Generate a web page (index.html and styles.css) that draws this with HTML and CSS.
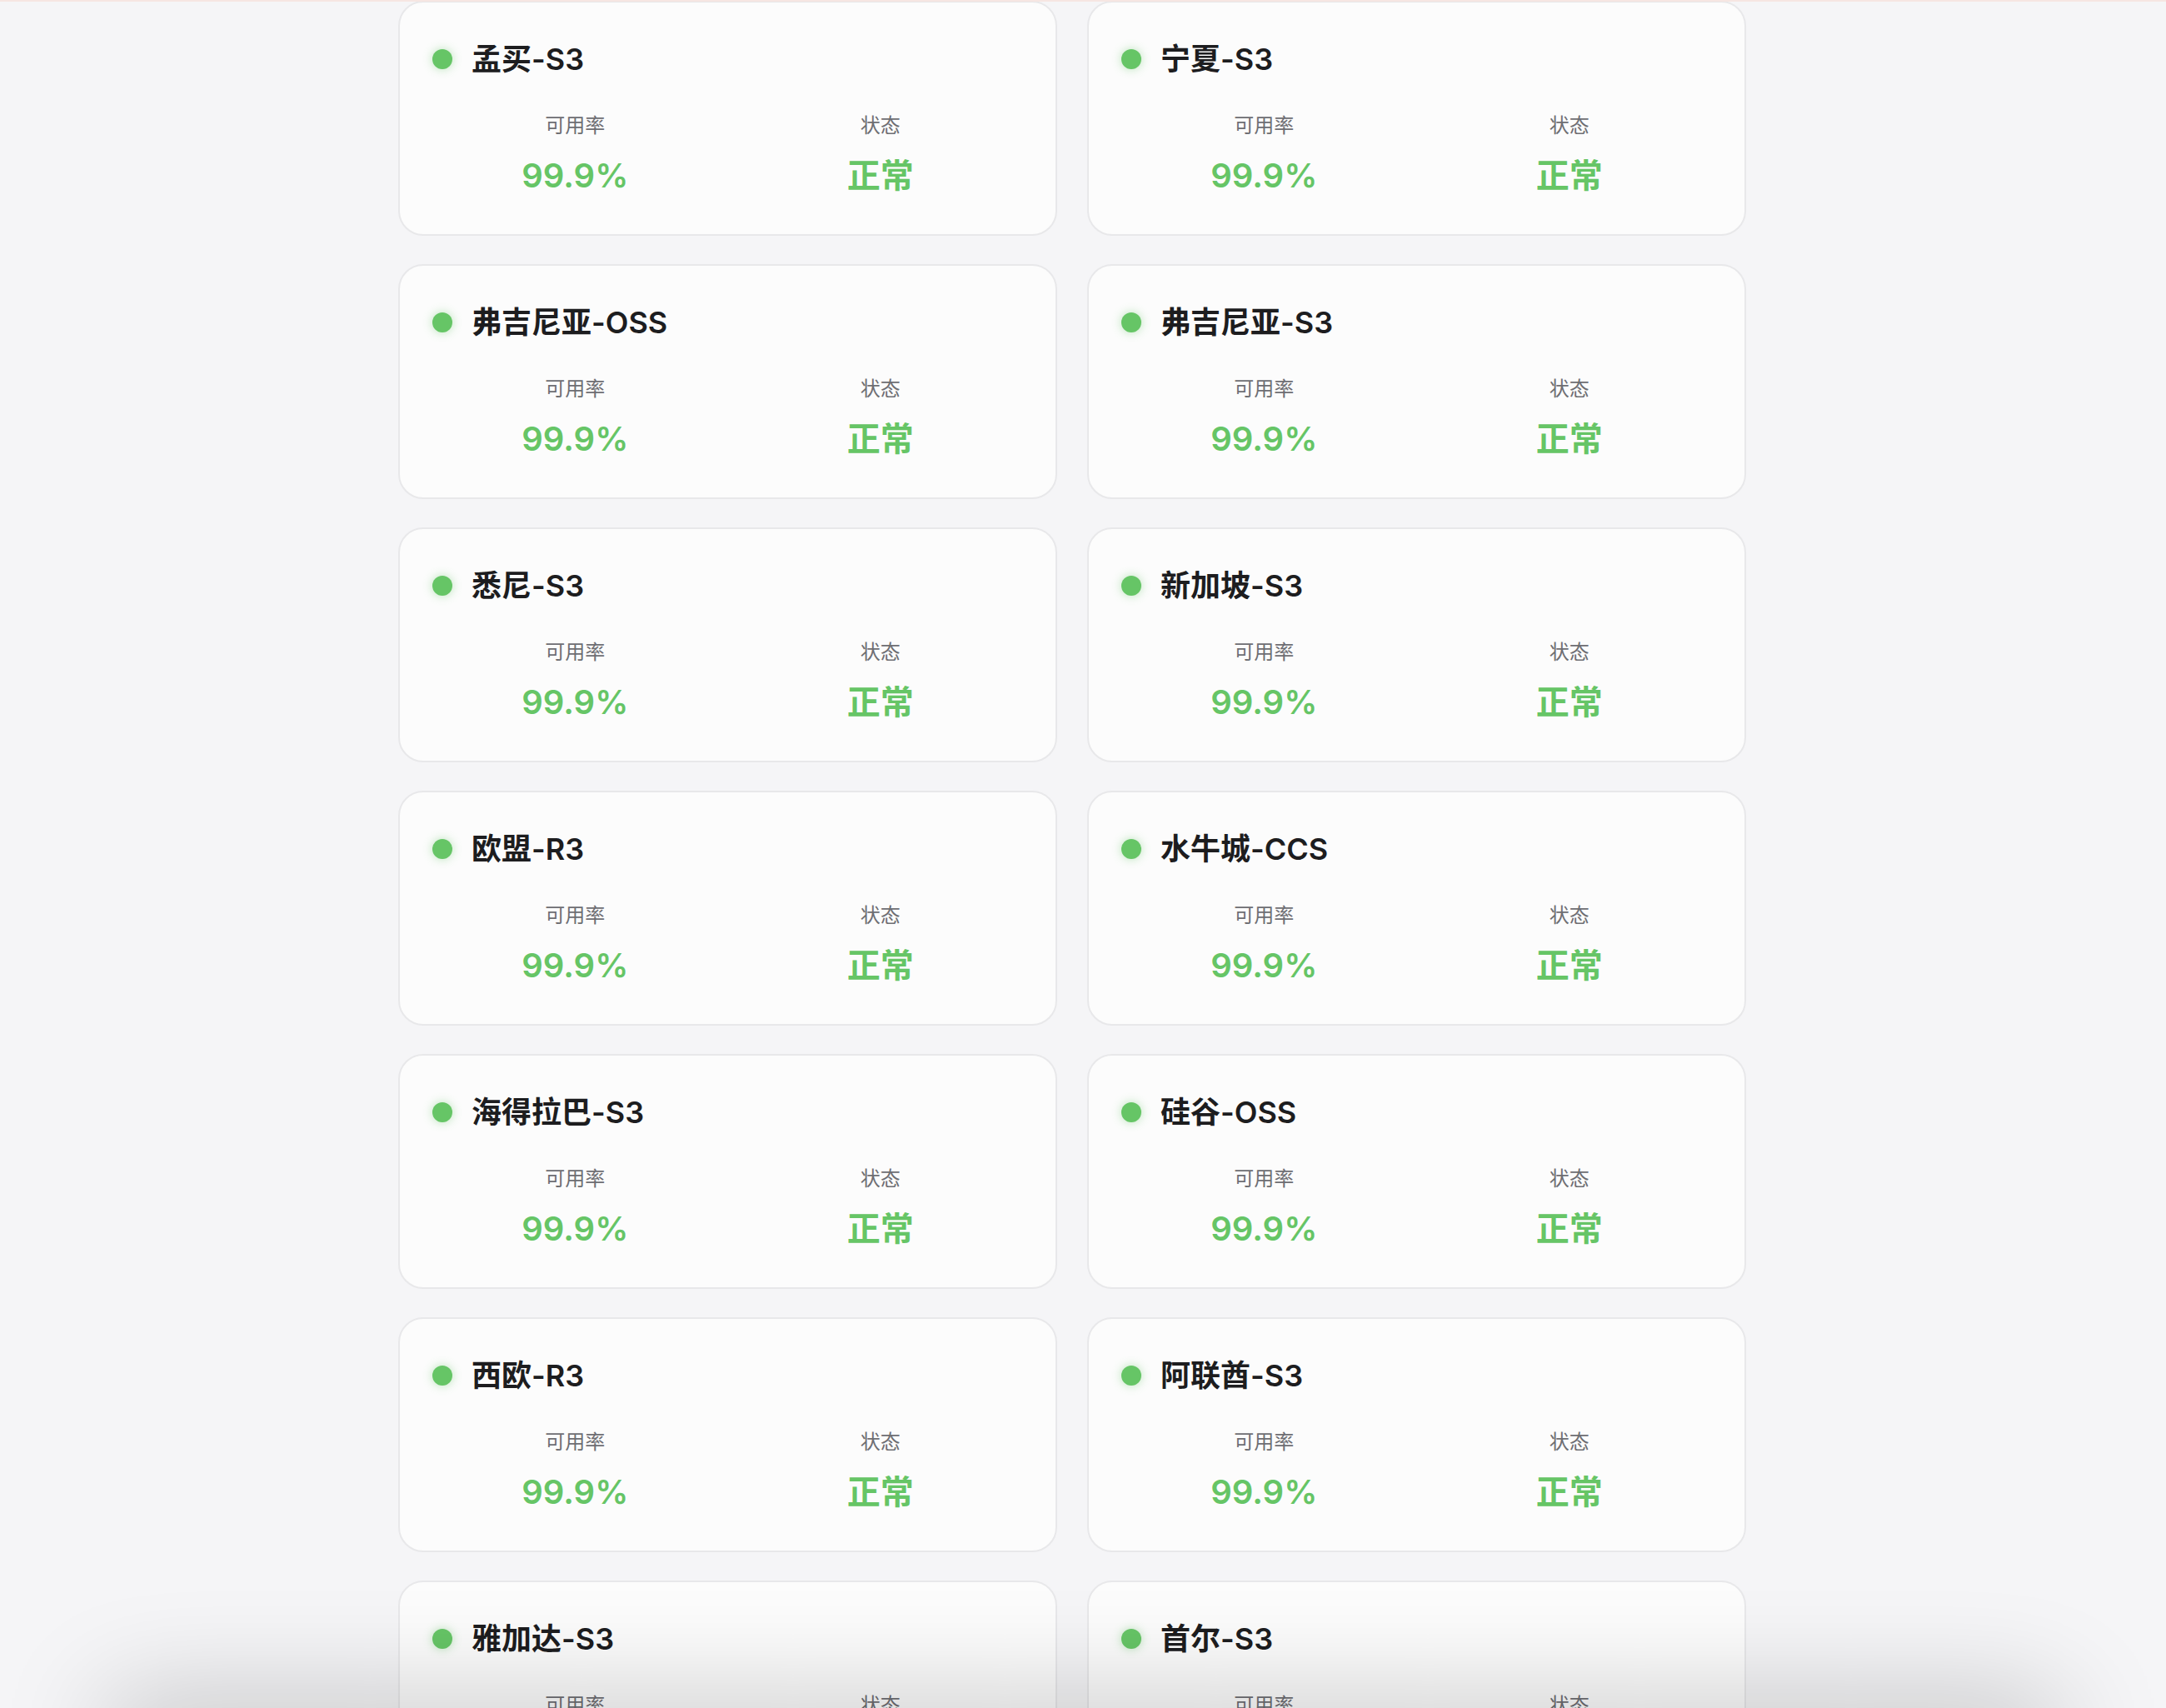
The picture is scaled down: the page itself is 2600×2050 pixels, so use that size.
FILE: index.html
```html
<!DOCTYPE html>
<html lang="zh-CN">
<head>
<meta charset="utf-8">
<title>区域状态</title>
<link rel="stylesheet" href="styles.css">
</head>
<body>
<div class="top-line"></div>
<main class="grid">
  <section class="card"><div class="card-head"><span class="dot"></span><h3 class="name">孟买-S3</h3></div><div class="metrics"><div class="metric"><div class="label">可用率</div><div class="value">99.9%</div></div><div class="metric"><div class="label">状态</div><div class="value">正常</div></div></div></section>
  <section class="card"><div class="card-head"><span class="dot"></span><h3 class="name">宁夏-S3</h3></div><div class="metrics"><div class="metric"><div class="label">可用率</div><div class="value">99.9%</div></div><div class="metric"><div class="label">状态</div><div class="value">正常</div></div></div></section>
  <section class="card"><div class="card-head"><span class="dot"></span><h3 class="name">弗吉尼亚-OSS</h3></div><div class="metrics"><div class="metric"><div class="label">可用率</div><div class="value">99.9%</div></div><div class="metric"><div class="label">状态</div><div class="value">正常</div></div></div></section>
  <section class="card"><div class="card-head"><span class="dot"></span><h3 class="name">弗吉尼亚-S3</h3></div><div class="metrics"><div class="metric"><div class="label">可用率</div><div class="value">99.9%</div></div><div class="metric"><div class="label">状态</div><div class="value">正常</div></div></div></section>
  <section class="card"><div class="card-head"><span class="dot"></span><h3 class="name">悉尼-S3</h3></div><div class="metrics"><div class="metric"><div class="label">可用率</div><div class="value">99.9%</div></div><div class="metric"><div class="label">状态</div><div class="value">正常</div></div></div></section>
  <section class="card"><div class="card-head"><span class="dot"></span><h3 class="name">新加坡-S3</h3></div><div class="metrics"><div class="metric"><div class="label">可用率</div><div class="value">99.9%</div></div><div class="metric"><div class="label">状态</div><div class="value">正常</div></div></div></section>
  <section class="card"><div class="card-head"><span class="dot"></span><h3 class="name">欧盟-R3</h3></div><div class="metrics"><div class="metric"><div class="label">可用率</div><div class="value">99.9%</div></div><div class="metric"><div class="label">状态</div><div class="value">正常</div></div></div></section>
  <section class="card"><div class="card-head"><span class="dot"></span><h3 class="name">水牛城-CCS</h3></div><div class="metrics"><div class="metric"><div class="label">可用率</div><div class="value">99.9%</div></div><div class="metric"><div class="label">状态</div><div class="value">正常</div></div></div></section>
  <section class="card"><div class="card-head"><span class="dot"></span><h3 class="name">海得拉巴-S3</h3></div><div class="metrics"><div class="metric"><div class="label">可用率</div><div class="value">99.9%</div></div><div class="metric"><div class="label">状态</div><div class="value">正常</div></div></div></section>
  <section class="card"><div class="card-head"><span class="dot"></span><h3 class="name">硅谷-OSS</h3></div><div class="metrics"><div class="metric"><div class="label">可用率</div><div class="value">99.9%</div></div><div class="metric"><div class="label">状态</div><div class="value">正常</div></div></div></section>
  <section class="card"><div class="card-head"><span class="dot"></span><h3 class="name">西欧-R3</h3></div><div class="metrics"><div class="metric"><div class="label">可用率</div><div class="value">99.9%</div></div><div class="metric"><div class="label">状态</div><div class="value">正常</div></div></div></section>
  <section class="card"><div class="card-head"><span class="dot"></span><h3 class="name">阿联酋-S3</h3></div><div class="metrics"><div class="metric"><div class="label">可用率</div><div class="value">99.9%</div></div><div class="metric"><div class="label">状态</div><div class="value">正常</div></div></div></section>
  <section class="card"><div class="card-head"><span class="dot"></span><h3 class="name">雅加达-S3</h3></div><div class="metrics"><div class="metric"><div class="label">可用率</div><div class="value">99.9%</div></div><div class="metric"><div class="label">状态</div><div class="value">正常</div></div></div></section>
  <section class="card"><div class="card-head"><span class="dot"></span><h3 class="name">首尔-S3</h3></div><div class="metrics"><div class="metric"><div class="label">可用率</div><div class="value">99.9%</div></div><div class="metric"><div class="label">状态</div><div class="value">正常</div></div></div></section>
</main>
<div class="bottom-shade"></div>
</body>
</html>
```

FILE: styles.css
```css
* { box-sizing: border-box; }

html, body {
  margin: 0;
  padding: 0;
  background: #f5f5f7;
  font-family: "Inter", "Noto Sans CJK SC", "Noto Sans", sans-serif;
  color: #1d1d1f;
  overflow: hidden;
  height: 2050px;
}

.top-line {
  position: fixed;
  top: 0;
  left: 0;
  right: 0;
  height: 2px;
  background: #f6e6e2;
  z-index: 5;
}

.grid {
  display: grid;
  grid-template-columns: 791px 791px;
  gap: 34px 36px;
  width: 1618px;
  margin-left: 478px;
  padding-top: 1px;
}

.card {
  height: 282px;
  background: #fcfcfc;
  border: 2px solid #e8e8ea;
  border-radius: 30px;
  padding: 46px 39px;
}

.card-head {
  display: flex;
  align-items: center;
  gap: 23px;
  height: 44px;
}

.dot {
  width: 24px;
  height: 24px;
  border-radius: 50%;
  background: #66c566;
  box-shadow: 0 0 12px rgba(102, 197, 102, 0.45);
  flex: none;
}

.name {
  margin: 0;
  font-size: 36px;
  line-height: 44px;
  font-weight: 600;
  color: #1d1d1f;
}

.metrics {
  display: grid;
  grid-template-columns: 1fr 1fr;
  gap: 24px;
  margin-top: 42px;
  text-align: center;
}

.label {
  font-size: 24px;
  line-height: 32px;
  color: #6e6e73;
}

.value {
  margin-top: 20px;
  font-size: 40px;
  line-height: 48px;
  font-weight: 600;
  color: #66c566;
}

.bottom-shade {
  position: fixed;
  left: 140px;
  right: 140px;
  bottom: -80px;
  height: 80px;
  background: #d0d0d3;
  box-shadow: 0 0 130px 10px rgba(0, 0, 0, 0.22);
  z-index: 4;
}
```
